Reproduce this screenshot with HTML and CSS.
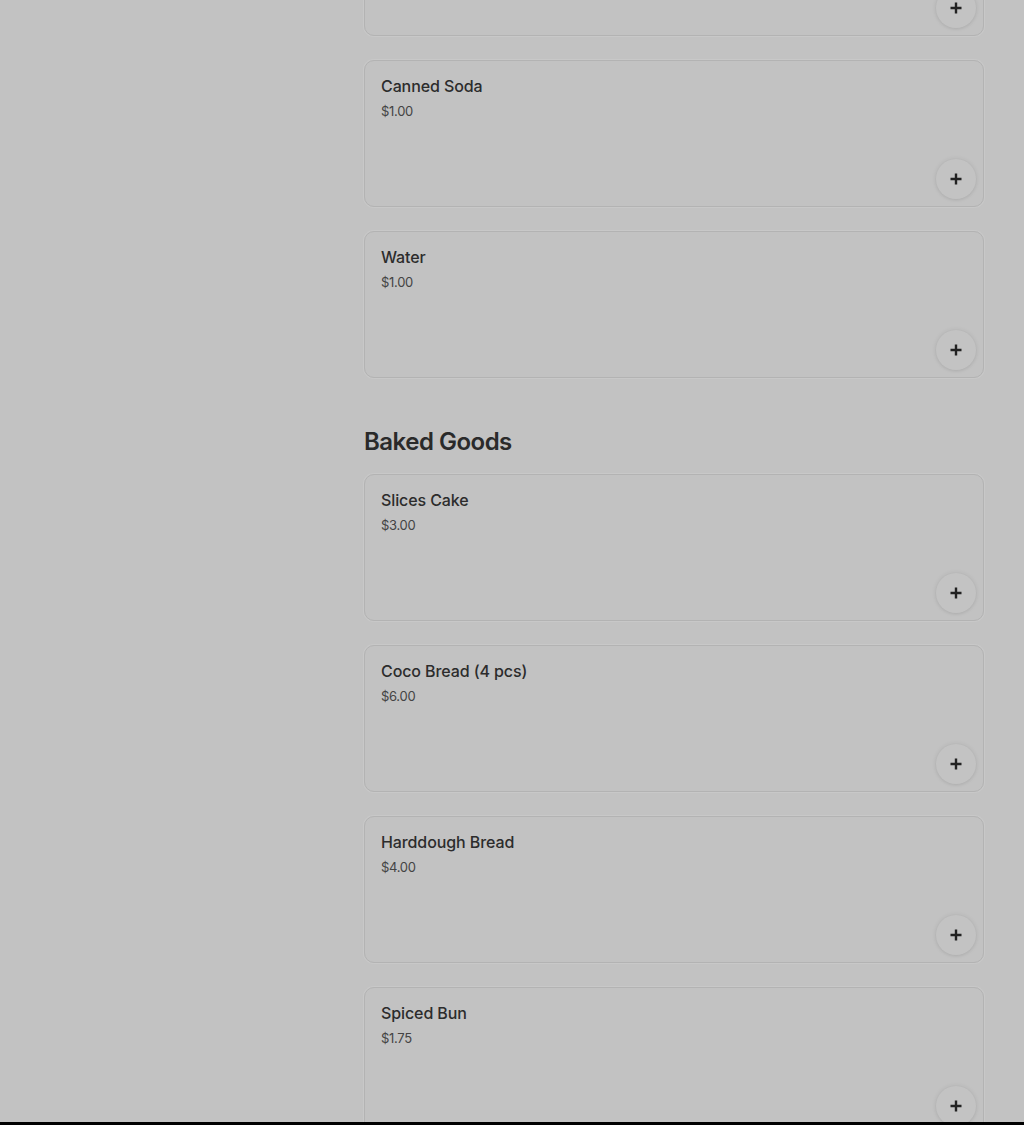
FILE: index.html
```html
<!DOCTYPE html>
<html>
<head>
<meta charset="utf-8">
<link rel="stylesheet" href="styles.css">
</head>
<body>
<div class="viewport">
  <main class="menu">
    <div class="list list-first">
      <div class="card"><button class="add"><svg viewBox="0 0 12 12" width="12" height="12"><path d="M6 0.5v11M0.5 6h11" stroke="currentColor" stroke-width="2.4"/></svg></button></div>
      <div class="card"><div class="name">Canned Soda</div><div class="price">$1.00</div><button class="add"><svg viewBox="0 0 12 12" width="12" height="12"><path d="M6 0.5v11M0.5 6h11" stroke="currentColor" stroke-width="2.4"/></svg></button></div>
      <div class="card"><div class="name">Water</div><div class="price">$1.00</div><button class="add"><svg viewBox="0 0 12 12" width="12" height="12"><path d="M6 0.5v11M0.5 6h11" stroke="currentColor" stroke-width="2.4"/></svg></button></div>
    </div>
    <h2 class="section-title">Baked Goods</h2>
    <div class="list">
      <div class="card"><div class="name">Slices Cake</div><div class="price">$3.00</div><button class="add"><svg viewBox="0 0 12 12" width="12" height="12"><path d="M6 0.5v11M0.5 6h11" stroke="currentColor" stroke-width="2.4"/></svg></button></div>
      <div class="card"><div class="name">Coco Bread (4 pcs)</div><div class="price">$6.00</div><button class="add"><svg viewBox="0 0 12 12" width="12" height="12"><path d="M6 0.5v11M0.5 6h11" stroke="currentColor" stroke-width="2.4"/></svg></button></div>
      <div class="card"><div class="name">Harddough Bread</div><div class="price">$4.00</div><button class="add"><svg viewBox="0 0 12 12" width="12" height="12"><path d="M6 0.5v11M0.5 6h11" stroke="currentColor" stroke-width="2.4"/></svg></button></div>
      <div class="card"><div class="name">Spiced Bun</div><div class="price">$1.75</div><button class="add"><svg viewBox="0 0 12 12" width="12" height="12"><path d="M6 0.5v11M0.5 6h11" stroke="currentColor" stroke-width="2.4"/></svg></button></div>
    </div>
  </main>
</div>
<div class="bottom-bar"></div>
</body>
</html>
```
FILE: styles.css
```css
html, body {
  margin: 0;
  padding: 0;
}
body {
  background: #c2c2c2;
  font-family: Inter, "Liberation Sans", sans-serif;
  color: #2a2a2a;
  height: 1125px;
  overflow: hidden;
  display: flex;
  flex-direction: column;
}
.viewport {
  height: 1122px;
  overflow: hidden;
  flex: none;
}
.bottom-bar {
  height: 3px;
  background: #000;
  flex: none;
}
.menu {
  width: 620px;
  margin-left: 364px;
}
.list {
  display: flex;
  flex-direction: column;
  gap: 24px;
}
.list-first {
  margin-top: -111px;
}
.card {
  position: relative;
  height: 147px;
  box-sizing: border-box;
  border: 1px solid #b3b3b3;
  border-radius: 10px;
  padding: 15px 16px;
  box-shadow: 0 0 0 1px #c8c8c8;
}
.name {
  font-size: 16px;
  line-height: 20px;
  font-weight: 500;
  color: #2c2c2c;
  letter-spacing: -0.1px;
}
.price {
  margin-top: 5px;
  font-size: 13px;
  line-height: 20px;
  color: #444;
  letter-spacing: -0.3px;
}
.add {
  position: absolute;
  right: 7px;
  bottom: 7px;
  width: 40px;
  height: 40px;
  border-radius: 50%;
  border: none;
  background: #c3c3c3;
  box-shadow: 0 0 5px rgba(0,0,0,0.09), 0 1px 3px rgba(0,0,0,0.05);
  display: flex;
  align-items: center;
  justify-content: center;
  padding: 0;
  color: #222;
}
.add svg {
  display: block;
}
.section-title {
  margin: 48px 0 16px;
  font-size: 24px;
  line-height: 32px;
  font-weight: 600;
  letter-spacing: -0.5px;
  color: #2a2a2a;
}
```
